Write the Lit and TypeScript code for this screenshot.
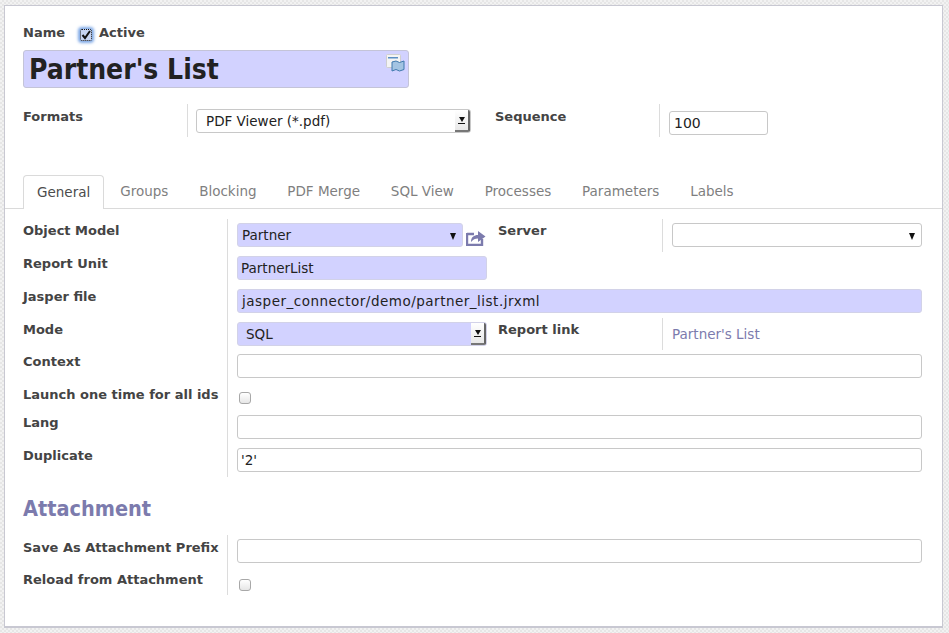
import { LitElement, html, css } from "lit";
import { customElement } from "lit/decorators.js";

const tabs = ["General", "Groups", "Blocking", "PDF Merge", "SQL View", "Processes", "Parameters", "Labels"];

@customElement("app-root")
export class AppRoot extends LitElement {
  static styles = css`
    :host {
      display: block;
      width: 949px;
      height: 633px;
      box-sizing: border-box;
      padding: 5px 6px 5px 4px;
      overflow: hidden;
      font-family: "DejaVu Sans", "Liberation Sans", sans-serif;
      font-size: 13px;
      color: #444;
      background-color: #f0f0f0;
      background-image: conic-gradient(#e6e6e6 25%, #f2f2f2 0 50%, #e6e6e6 0 75%, #f2f2f2 0);
      background-size: 4px 4px;
    }
    .card {
      height: 100%;
      box-sizing: border-box;
      background: #fff;
      border: 1px solid #c8c8d2;
      border-bottom-width: 2px;
      display: flex;
      flex-direction: column;
    }
    .sheet { padding: 19px 20px 0 18px; }
    .label { font-weight: 700; font-size: 13px; color: #444; line-height: 16px; }
    .top { display: flex; align-items: center; height: 16px; }
    .check-active {
      width: 12px; height: 12px; margin: 3px 7px 0 15px; box-sizing: border-box;
      background: #c6d4f2; border: 1px dotted #111; border-radius: 2px;
      box-shadow: 0 0 3px 2px #7fa9e6;
      display: flex; align-items: center; justify-content: center;
    }
    .title {
      margin-top: 9px; width: 386px; height: 38px; box-sizing: border-box;
      background: #d2d2ff; border: 1px solid #c4c4d8; border-radius: 3px;
      font-size: 28px; font-stretch: condensed; font-weight: 700; color: #222; line-height: 38px; padding-left: 5px;
      display: flex; justify-content: space-between;
    }
    .title svg { margin: 3px 3px 0 0; }
    .fmt { display: grid; grid-template-columns: 164px 308px 164px 1fr; margin-top: 16px; height: 33px; }
    .fmt .label { padding-top: 5px; }
    .cell { border-left: 1px solid #dcdcdc; padding: 5px 0 0 8px; box-sizing: border-box; min-width: 0; }
    .fmt .cell.seqcell { padding-left: 9px; }
    .field {
      height: 24px; box-sizing: border-box; background: #fff;
      border: 1px solid #c8c8c8; border-radius: 3px; color: #222;
      font-size: 13.5px; line-height: 22px; padding-left: 3px; white-space: nowrap; overflow: hidden;
    }
    .req { background: #d2d2ff; border-color: #d2d2e8; }
    .select { position: relative; padding-left: 8px; line-height: 23px; }
    .select.tight { padding-left: 4px; }
    .fmtsel { width: 275px; padding-left: 9px; }
    .bevel {
      position: absolute; right: 0; top: 0; bottom: 0; width: 15px; box-sizing: border-box;
      background: linear-gradient(#fff, #e8e8e8);
      border-right: 2px solid #666; border-bottom: 2px solid #777;
      display: flex; flex-direction: column; align-items: center; justify-content: center; gap: 1px;
    }
    .bevel i { display: block; width: 0; height: 0; border: 3.5px solid transparent; border-top: 5px solid #111; border-bottom: 0; }
    .bevel b { display: block; width: 7px; height: 1px; background: #111; }
    .arrow {
      position: absolute; right: 6px; top: 9px; width: 0; height: 0;
      border: 3.5px solid transparent; border-top: 7px solid #111; border-bottom: 0;
    }
    .seq { width: 99px; margin-top: 2px; padding-left: 4px; font-size: 14px; }
    .tabs {
      display: flex; margin-top: 38px; height: 34px; box-sizing: border-box;
      border-bottom: 1px solid #dadada; padding-left: 18px;
    }
    .tab { padding: 0 30.8px 0 0; line-height: 33px; color: #7f7f7f; font-size: 13.5px; white-space: nowrap; }
    .tab.on {
      color: #4c4c4c; background: #fff; height: 34px; box-sizing: border-box;
      border: 1px solid #dadada; border-bottom: 0; border-radius: 4px 4px 0 0;
      padding: 0 13px; margin-right: 16px;
    }
    .form { padding: 10px 20px 0 18px; }
    .grid { display: grid; grid-template-columns: 204px 1fr; }
    .main { grid-template-rows: 33px 33px 33px 32px 33px 28px 33px 33px; }
    .attach { margin-top: 10px; grid-template-rows: 32px 28px; }
    .grid .label { padding-top: 4px; white-space: nowrap; }
    .attach .label { padding-top: 5px; }
    .grid .cell { padding: 4px 0 0 9px; }
    .split { display: grid; grid-template-columns: 250px 175px 1fr; }
    .split .label { padding: 0 0 0 11px; }
    .split .side { border-left: 1px solid #dcdcdc; margin-top: -4px; padding: 4px 0 0 9px; }
    .with-icon { display: flex; align-items: flex-start; gap: 3px; }
    .with-icon .field { width: 226px; }
    .share { margin-top: 6px; flex: none; }
    .unit { width: 250px; }
    .wide { letter-spacing: 0.5px; padding-left: 4px; }
    .link { color: #7c7bad; font-size: 13.5px; line-height: 24px; }
    .box {
      display: block; width: 12px; height: 12px; margin: 5px 0 0 2px; box-sizing: border-box;
      border: 1px solid #a8a8a8; border-radius: 3px; background: linear-gradient(#fff, #e6e6e6);
    }
    .box.low { margin-top: 8px; }
    h2 { margin: 16px 0 0; font-size: 21.5px; font-stretch: condensed; line-height: 32px; font-weight: 700; color: #7c7bad; }
  `;

  render() {
    return html`
      <div class="card">
        <div class="sheet">
          <div class="top label">
            <span>Name</span>
            <span class="check-active">
              <svg width="10" height="10" viewBox="0 0 10 10"><path d="M1.5 5 L4 8 L9 1" fill="none" stroke="#111" stroke-width="2"/></svg>
            </span>
            <span>Active</span>
          </div>
          <div class="title">
            <span>Partner's List</span>
            <svg width="19" height="18" viewBox="0 0 19 18">
              <rect x="0.5" y="0.5" width="14" height="13" rx="1" fill="#f4f4f4" stroke="#cfcfcf"/>
              <rect x="2" y="3" width="10" height="1.5" fill="#5b8ec4"/>
              <path d="M6 8 L10 7 L13.5 8.5 L18 7 V15.5 L13.5 17 L10 15.5 L6 17 Z" fill="#a3c4e2" stroke="#3f79ad"/>
            </svg>
          </div>
          <div class="fmt">
            <div class="label">Formats</div>
            <div class="cell">
              <div class="field select fmtsel">PDF Viewer (*.pdf)<span class="bevel"><i></i><b></b></span></div>
            </div>
            <div class="label">Sequence</div>
            <div class="cell seqcell"><div class="field seq">100</div></div>
          </div>
        </div>

        <div class="tabs">
          ${tabs.map((t, i) => html`<div class="tab ${i === 0 ? "on" : ""}">${t}</div>`)}
        </div>

        <div class="form">
          <div class="grid main">
            <div class="label">Object Model</div>
            <div class="cell split">
              <div class="with-icon">
                <div class="field req select tight">Partner<span class="arrow"></span></div>
                <svg class="share" width="20" height="17" viewBox="0 0 20 17">
                  <path d="M1 5 H8 M1 4 V16 H16 V10" fill="none" stroke="#7c7bad" stroke-width="2.4"/>
                  <path d="M5 13 C5 8 8 6 12 6 V2 L19.5 7.5 L12 13 V9.5 C9 9.5 7 10.5 5 13 Z" fill="#7c7bad"/>
                </svg>
              </div>
              <div class="label">Server</div>
              <div class="side"><div class="field select"><span class="arrow"></span></div></div>
            </div>

            <div class="label">Report Unit</div>
            <div class="cell"><div class="field req unit">PartnerList</div></div>

            <div class="label">Jasper file</div>
            <div class="cell"><div class="field req wide">jasper_connector/demo/partner_list.jrxml</div></div>

            <div class="label">Mode</div>
            <div class="cell split">
              <div class="field req select">SQL<span class="bevel"><i></i><b></b></span></div>
              <div class="label">Report link</div>
              <div class="side"><span class="link">Partner's List</span></div>
            </div>

            <div class="label">Context</div>
            <div class="cell"><div class="field"></div></div>

            <div class="label">Launch one time for all ids</div>
            <div class="cell"><span class="box"></span></div>

            <div class="label">Lang</div>
            <div class="cell"><div class="field"></div></div>

            <div class="label">Duplicate</div>
            <div class="cell"><div class="field">'2'</div></div>
          </div>

          <h2>Attachment</h2>

          <div class="grid attach">
            <div class="label">Save As Attachment Prefix</div>
            <div class="cell"><div class="field"></div></div>
            <div class="label">Reload from Attachment</div>
            <div class="cell"><span class="box low"></span></div>
          </div>
        </div>
      </div>
    `;
  }
}
